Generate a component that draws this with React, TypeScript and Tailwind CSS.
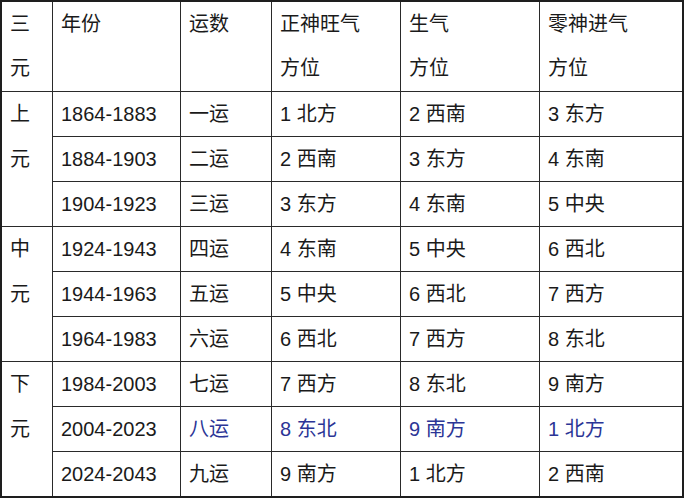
const rows = [
  { year: "1864-1883", yun: "一运", a: "1 北方", b: "2 西南", c: "3 东方" },
  { year: "1884-1903", yun: "二运", a: "2 西南", b: "3 东方", c: "4 东南" },
  { year: "1904-1923", yun: "三运", a: "3 东方", b: "4 东南", c: "5 中央" },
  { year: "1924-1943", yun: "四运", a: "4 东南", b: "5 中央", c: "6 西北" },
  { year: "1944-1963", yun: "五运", a: "5 中央", b: "6 西北", c: "7 西方" },
  { year: "1964-1983", yun: "六运", a: "6 西北", b: "7 西方", c: "8 东北" },
  { year: "1984-2003", yun: "七运", a: "7 西方", b: "8 东北", c: "9 南方" },
  { year: "2004-2023", yun: "八运", a: "8 东北", b: "9 南方", c: "1 北方", blue: true },
  { year: "2024-2043", yun: "九运", a: "9 南方", b: "1 北方", c: "2 西南" },
];

const eras = ["上元", "中元", "下元"];

const cell = "bg-white px-2 flex items-center";
const head = "bg-white px-2 leading-[44px]";

export default function App() {
  return (
    <div className="w-[684px] h-[500px] bg-white font-['Liberation_Sans','Noto_Sans_CJK_SC',sans-serif] text-[20px] text-[#1a1a1a]">
      <div className="grid grid-cols-[50px_127px_90px_128px_138px_142px] grid-rows-[89px_repeat(9,44px)] gap-px bg-[#2a2a2a] border-2 border-[#1e1e1e]">
        <div className={head}>
          三<br />元
        </div>
        <div className={head}>年份</div>
        <div className={head}>运数</div>
        <div className={head}>
          正神旺气<br />方位
        </div>
        <div className={head}>
          生气<br />方位
        </div>
        <div className={head}>
          零神进气<br />方位
        </div>

        {rows.map((r, i) => (
          <div key={r.year} className="contents">
            {i % 3 === 0 && (
              <div className="row-span-3 bg-white px-2 leading-[45px]">
                {eras[i / 3][0]}
                <br />
                {eras[i / 3][1]}
              </div>
            )}
            <div className={cell}>{r.year}</div>
            <div className={`${cell} ${r.blue ? "text-[#2b3596]" : ""}`}>{r.yun}</div>
            <div className={`${cell} ${r.blue ? "text-[#2b3596]" : ""}`}>{r.a}</div>
            <div className={`${cell} ${r.blue ? "text-[#2b3596]" : ""}`}>{r.b}</div>
            <div className={`${cell} ${r.blue ? "text-[#2b3596]" : ""}`}>{r.c}</div>
          </div>
        ))}
      </div>
    </div>
  );
}
